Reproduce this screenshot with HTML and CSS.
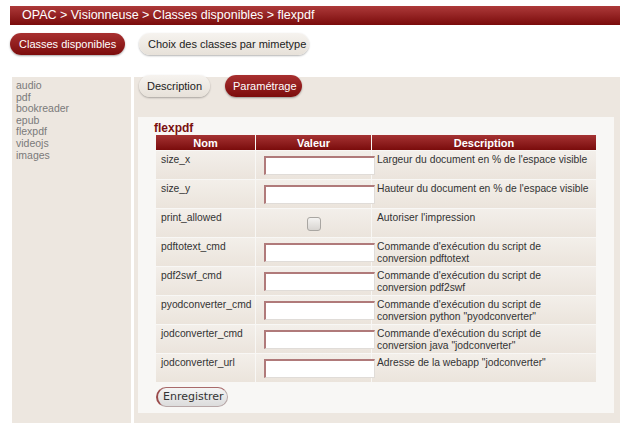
FILE: index.html
```html
<!DOCTYPE html>
<html lang="fr">
<head>
<meta charset="utf-8">
<title>OPAC - Visionneuse</title>
<link rel="stylesheet" href="styles.css">
</head>
<body>
<div class="page">
  <div class="breadcrumb">OPAC &gt; Visionneuse &gt; Classes disponibles &gt; flexpdf</div>
  <div class="topbtns">
    <span class="btn btn-red">Classes disponibles</span>
    <span class="btn btn-light">Choix des classes par mimetype</span>
  </div>
  <div class="main">
    <div class="side">
      <div class="side-item">audio</div>
      <div class="side-item">pdf</div>
      <div class="side-item">bookreader</div>
      <div class="side-item">epub</div>
      <div class="side-item">flexpdf</div>
      <div class="side-item">videojs</div>
      <div class="side-item">images</div>
    </div>
    <div class="content">
      <div class="tabs">
        <span class="btn btn-light tab">Description</span>
        <span class="btn btn-red tab">Paramétrage</span>
      </div>
      <div class="box">
        <div class="box-title">flexpdf</div>
        <table class="params">
          <thead>
            <tr><th class="c-nom">Nom</th><th class="c-val">Valeur</th><th class="c-desc">Description</th></tr>
          </thead>
          <tbody>
            <tr><td>size_x</td><td class="val"><input class="inp" type="text"></td><td class="desc">Largeur du document en % de l'espace visible</td></tr>
            <tr><td>size_y</td><td class="val"><input class="inp" type="text"></td><td class="desc">Hauteur du document en % de l'espace visible</td></tr>
            <tr><td>print_allowed</td><td class="val chk"><span class="checkbox"></span></td><td class="desc">Autoriser l'impression</td></tr>
            <tr><td>pdftotext_cmd</td><td class="val"><input class="inp" type="text"></td><td class="desc">Commande d'exécution du script de conversion pdftotext</td></tr>
            <tr><td>pdf2swf_cmd</td><td class="val"><input class="inp" type="text"></td><td class="desc">Commande d'exécution du script de conversion pdf2swf</td></tr>
            <tr><td>pyodconverter_cmd</td><td class="val"><input class="inp" type="text"></td><td class="desc">Commande d'exécution du script de conversion python "pyodconverter"</td></tr>
            <tr><td>jodconverter_cmd</td><td class="val"><input class="inp" type="text"></td><td class="desc">Commande d'exécution du script de conversion java "jodconverter"</td></tr>
            <tr><td>jodconverter_url</td><td class="val"><input class="inp" type="text"></td><td class="desc">Adresse de la webapp "jodconverter"</td></tr>
          </tbody>
        </table>
        <div class="actions"><span class="save">Enregistrer</span></div>
      </div>
    </div>
  </div>
</div>
</body>
</html>
```

FILE: styles.css
```css
html, body {
  margin: 0;
  padding: 0;
  background: #ffffff;
  font-family: "Liberation Sans", Arial, sans-serif;
}

.page {
  padding: 6px 10px 0 10px;
}

.breadcrumb {
  height: 19px;
  line-height: 19px;
  padding-left: 12px;
  color: #ffffff;
  font-size: 12.5px;
  background: linear-gradient(#ad3a3a, #7a0b0b);
}

.topbtns {
  display: flex;
  gap: 14px;
  margin-top: 8px;
}

.btn {
  display: inline-block;
  height: 22px;
  line-height: 22px;
  font-size: 11px;
  border-radius: 11px;
  box-sizing: border-box;
  padding: 0 9px;
  white-space: nowrap;
}

.btn-red {
  color: #ffffff;
  background: linear-gradient(#a83030, #7c0c0c);
  box-shadow: 0 1px 2px rgba(0,0,0,0.35);
}

.btn-light {
  color: #222222;
  background: linear-gradient(#f6f3ef, #e7e1d9);
  box-shadow: 0 1px 2px rgba(0,0,0,0.3);
}

.topbtns .btn-red { width: 115px; }
.topbtns .btn-light { width: 170px; }

.main {
  display: flex;
  gap: 3px;
  margin-top: 22px;
  margin-left: 2px;
}

.side {
  width: 120px;
  background: #ede7e0;
  padding: 3px 0 0 4px;
  box-sizing: border-box;
  height: 346px;
}

.side-item {
  font-size: 10.5px;
  line-height: 11.6px;
  color: #7a7a7a;
}

.content {
  flex: 1;
  background: #ede7e0;
  padding: 0 6px 10px 4px;
}

.tabs {
  display: flex;
  gap: 15px;
  margin-top: -2px;
  margin-left: 1px;
}

.tab { padding: 0 8px; }
.tabs .btn-light { width: 71px; }
.tabs .btn-red { width: 77px; }

.box {
  margin-top: 20px;
  background: #f8f7f5;
  padding: 4px 17px 6px 18px;
  height: 286px;
}

.box-title {
  font-size: 12px;
  font-weight: bold;
  color: #7a1010;
  line-height: 14px;
  margin-left: -2px;
}

.params {
  border-collapse: separate;
  border-spacing: 1px 1px;
  margin: -1px 0 0 -1px;
  width: 442px;
  table-layout: fixed;
}

.params th {
  height: 15px;
  padding: 0;
  font-size: 11px;
  font-weight: bold;
  color: #ffffff;
  text-align: center;
  background: linear-gradient(#a53333, #7a0c0c);
}

.c-nom { width: 99px; }
.c-val { width: 115px; }

.params td {
  height: 28px;
  box-sizing: border-box;
  padding: 3px 4px 0 5px;
  vertical-align: top;
  font-size: 10.3px;
  line-height: 12px;
  color: #333333;
  background: linear-gradient(#f3efea, #ebe4dc);
}

.params td.desc {
  padding: 3px 5px 0 5px;
}

.params td.val {
  padding: 5px 0 0 7px;
  overflow: visible;
}

.inp {
  display: block;
  width: 111px;
  height: 19px;
  box-sizing: border-box;
  margin: 0 0 0 1px;
  padding: 0;
  border: 1px solid;
  border-color: #b07a7a #e0dcd8 #e0dcd8 #b07a7a;
  border-top-width: 2px;
  border-left-width: 2px;
  background: #ffffff;
  position: relative;
}

.params td.chk {
  padding: 8px 0 0 0;
  text-align: center;
}

.checkbox {
  display: inline-block;
  width: 12px;
  height: 12px;
  border: 1px solid #a9a6a2;
  border-radius: 3px;
  background: linear-gradient(#f4f3f1, #d8d5d1);
}

.actions {
  margin-top: 3px;
}

.save {
  display: inline-block;
  height: 20px;
  line-height: 18px;
  box-sizing: border-box;
  padding: 0 5px;
  width: 72px;
  text-align: center;
  font-family: "DejaVu Sans", Verdana, sans-serif;
  font-size: 11px;
  color: #333333;
  border-radius: 10px;
  border: 1px solid #b8a8a8;
  border-left: 2px solid #9a4a4a;
  border-top: 1px solid #a86a6a;
  background: linear-gradient(#f4f4f4, #dcdcdc);
}
```
